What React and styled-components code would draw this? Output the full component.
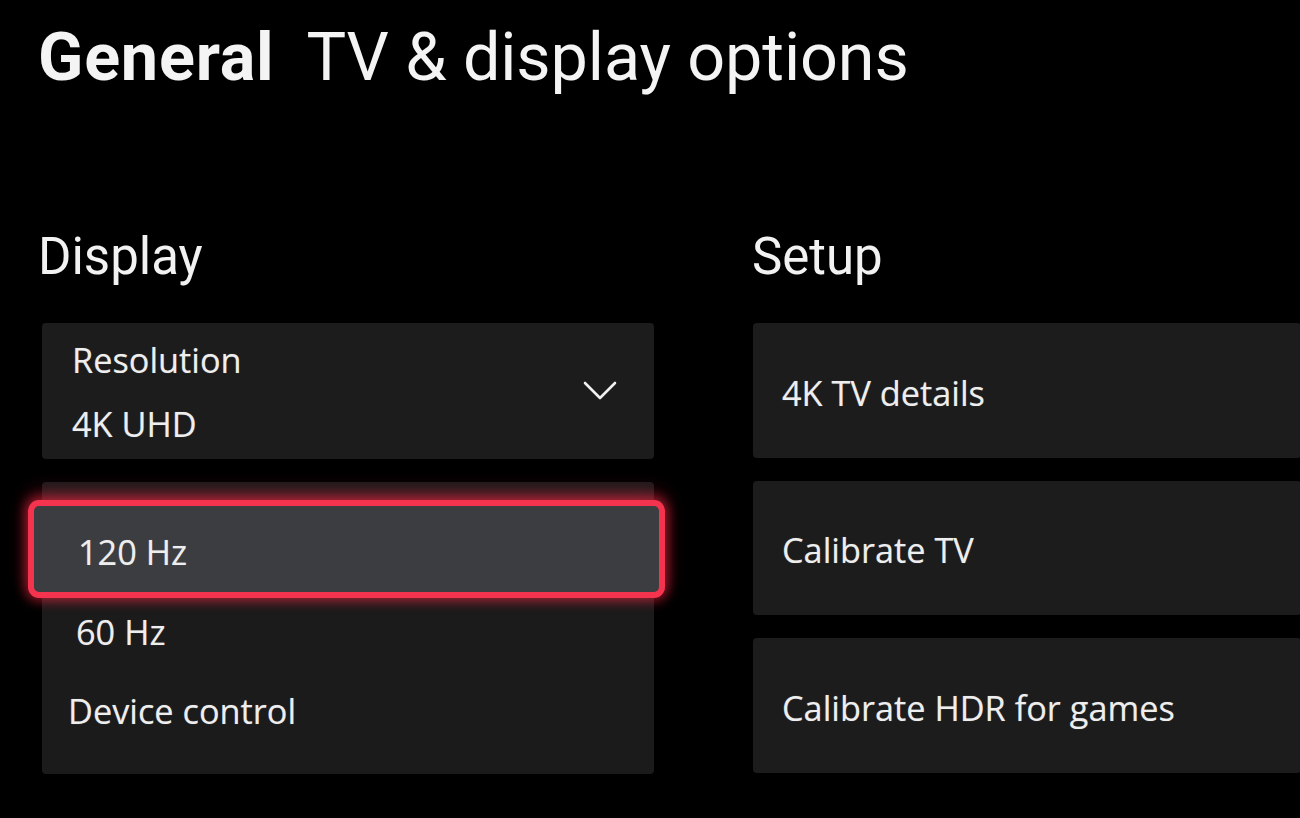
import React from "react";
import styled, { createGlobalStyle } from "styled-components";

const GlobalStyle = createGlobalStyle`
  html, body { margin: 0; padding: 0; background: #000; }
  * { box-sizing: border-box; }
`;

const Page = styled.div`
  width: 1300px;
  height: 818px;
  overflow: hidden;
  background: #000;
  padding: 24px 0 0 38px;
  color: #efefef;
`;

const TitleRow = styled.h1`
  margin: 0;
  display: flex;
  gap: 32px;
  font-family: Roboto, "Liberation Sans", sans-serif;
  font-size: 66.5px;
  line-height: 66px;
  font-weight: 400;
  letter-spacing: -0.1px;
  color: #f4f4f4;
  white-space: nowrap;
`;

const TitleStrong = styled.span`
  font-weight: 700;
  letter-spacing: 0.8px;
`;

const Columns = styled.div`
  margin-top: 141px;
  display: grid;
  grid-template-columns: 616px 548px;
  column-gap: 98px;
  align-items: start;
`;

const Column = styled.section`
  display: flex;
  flex-direction: column;
`;

const SectionHeading = styled.h2`
  margin: 0 0 41px 0;
  font-family: Roboto, "Liberation Sans", sans-serif;
  font-size: 51px;
  line-height: 51px;
  font-weight: 400;
  color: #f2f2f2;
`;

const Stack = styled.div`
  display: flex;
  flex-direction: column;
  gap: 23px;
  margin-left: ${(p) => p.$inset}px;
`;

const Label = styled.span`
  font-family: "Open Sans", "Noto Sans", sans-serif;
  font-size: 34.3px;
  font-weight: 500;
  letter-spacing: 0px;
  color: #eeeeee;
  white-space: nowrap;
  text-shadow: 0 0 1px rgba(255, 255, 255, 0.35);
`;

const SelectCard = styled.div`
  width: 612px;
  height: 136px;
  background: #1c1c1d;
  border-radius: 4px;
  padding: 5px 37px 0 30px;
  display: flex;
  align-items: flex-start;
  justify-content: space-between;
`;

const SelectText = styled.div`
  display: flex;
  flex-direction: column;
  line-height: 64px;
`;

const Chevron = styled.svg`
  width: 34px;
  height: 20px;
  margin-top: 53px;
`;

const OptionList = styled.div`
  width: 612px;
  background: #1b1b1c;
  border-radius: 4px;
  padding: 18px 0 18px 0;
  display: flex;
  flex-direction: column;
`;

const FocusedOption = styled.div`
  height: 98px;
  margin: 0 -11px 0 -14px;
  border: 6px solid #f4344f;
  border-radius: 11px;
  background: #3c3d40;
  box-shadow: 0 0 12px 3px rgba(255, 40, 70, 0.55),
    0 -8px 20px rgba(255, 40, 70, 0.28);
  display: flex;
  align-items: center;
  padding: 6px 0 0 44px;
  line-height: 46px;
`;

const OptionRow = styled.div`
  height: ${(p) => p.$h}px;
  display: flex;
  align-items: center;
  padding-left: ${(p) => p.$indent}px;
  line-height: 46px;
`;

const ActionCard = styled.div`
  width: 548px;
  height: ${(p) => p.$h}px;
  background: #1c1c1d;
  border-radius: 4px;
  display: flex;
  align-items: center;
  padding: 4px 0 0 29px;
  line-height: 46px;
`;

export default function App() {
  return (
    <>
      <GlobalStyle />
      <Page>
        <TitleRow>
          <TitleStrong>General</TitleStrong>
          <span>TV &amp; display options</span>
        </TitleRow>
        <Columns>
          <Column>
            <SectionHeading>Display</SectionHeading>
            <Stack $inset={4}>
              <SelectCard>
                <SelectText>
                  <Label>Resolution</Label>
                  <Label>4K UHD</Label>
                </SelectText>
                <Chevron viewBox="0 0 34 20" fill="none">
                  <polyline
                    points="2,2 17,17 32,2"
                    stroke="#f0f0f0"
                    strokeWidth="2.6"
                    strokeLinecap="round"
                    strokeLinejoin="round"
                  />
                </Chevron>
              </SelectCard>
              <OptionList>
                <FocusedOption>
                  <Label>120 Hz</Label>
                </FocusedOption>
                <OptionRow $h={68} $indent={34}>
                  <Label>60 Hz</Label>
                </OptionRow>
                <OptionRow $h={90} $indent={26}>
                  <Label>Device control</Label>
                </OptionRow>
              </OptionList>
            </Stack>
          </Column>
          <Column>
            <SectionHeading>Setup</SectionHeading>
            <Stack $inset={1}>
              <ActionCard $h={135}>
                <Label>4K TV details</Label>
              </ActionCard>
              <ActionCard $h={134}>
                <Label>Calibrate TV</Label>
              </ActionCard>
              <ActionCard $h={135}>
                <Label>Calibrate HDR for games</Label>
              </ActionCard>
            </Stack>
          </Column>
        </Columns>
      </Page>
    </>
  );
}
